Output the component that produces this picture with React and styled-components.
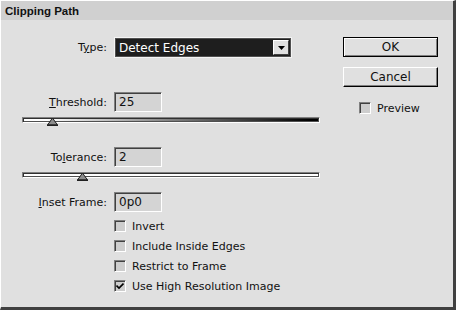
import React from 'react';
import styled, { createGlobalStyle } from 'styled-components';

const GlobalStyle = createGlobalStyle`
    html, body {
        margin: 0;
        padding: 0;
        background: #e0e0e0;
    }
    body {
        font-family: "DejaVu Sans", "Liberation Sans", sans-serif;
        font-size: 11px;
        color: #111;
    }
`;

const Dialog = styled.div`
    width: 456px;
    height: 310px;
    box-sizing: border-box;
    background: #e0e0e0;
    border-top: 1px solid #fff;
    border-left: 1px solid #fff;
    border-right: 3px solid #404040;
    border-bottom: 3px solid #404040;
    display: flex;
    flex-direction: column;
`;

const TitleBar = styled.div`
    height: 19px;
    background: #d0d0d0;
    display: flex;
    align-items: center;
    padding-left: 4px;
    font-family: "Liberation Sans", sans-serif;
    font-weight: 700;
    font-size: 11.5px;
`;

const Body = styled.div`
    display: flex;
    padding: 17px 0 0 21px;
`;

const Form = styled.div`
    width: 298px;
    display: flex;
    flex-direction: column;
`;

const Side = styled.div`
    margin-left: 23px;
    width: 95px;
    display: flex;
    flex-direction: column;
`;

const FieldRow = styled.div`
    display: flex;
    align-items: center;
    height: ${p => p.$h || 20}px;
    margin-top: ${p => p.$mt || 0}px;
`;

const Label = styled.label`
    width: 85px;
    margin-right: 7px;
    text-align: right;
    white-space: nowrap;
`;

const Key = styled.span`
    text-decoration: underline;
`;

const Select = styled.div`
    width: 178px;
    height: 21px;
    box-sizing: border-box;
    border: 1px solid #f4f4f4;
    box-shadow: inset 0 0 0 1px #505050;
    background: #1e1e1e;
    display: flex;
    align-items: center;
    padding: 2px;
    color: #fff;
`;

const SelectText = styled.span`
    flex: 1;
    padding-left: 2px;
    font-size: 12px;
`;

const ArrowButton = styled.span`
    width: 16px;
    height: 15px;
    box-sizing: border-box;
    background: #e0e0e0;
    border-style: solid;
    border-width: 1px;
    border-color: #fff #404040 #404040 #fff;
    display: flex;
    align-items: center;
    justify-content: center;
`;

const Input = styled.div`
    width: 48px;
    height: 20px;
    box-sizing: border-box;
    background: #d4d4d4;
    border-style: solid;
    border-width: 1px;
    border-color: #808080 #fff #fff #808080;
    box-shadow: inset 1px 1px 0 #404040;
    display: flex;
    align-items: center;
    padding-left: 4px;
    font-size: 12px;
`;

const Track = styled.div`
    position: relative;
    height: 6px;
    box-sizing: border-box;
    margin-top: 5px;
    border-style: solid;
    border-width: 1px;
    border-color: #808080 #fff #fff #808080;
    box-shadow: inset 1px 1px 0 #303030, inset -1px -1px 0 #505050;
    background: ${p => p.$gradient
        ? 'linear-gradient(to right, #fff 0%, #fff 8%, #808080 50%, #000 97%)'
        : '#fff'};
`;

const Thumb = styled.svg`
    position: absolute;
    top: -1px;
    width: 11px;
    height: 9px;
    margin-left: -5px;
`;

const CheckList = styled.div`
    display: flex;
    flex-direction: column;
    gap: 8px;
    margin: ${p => p.$margin || '8px 0 0 92px'};
`;

const CheckRow = styled.div`
    display: flex;
    align-items: center;
    height: 12px;
    gap: 6px;
    white-space: nowrap;
`;

const Box = styled.span`
    width: 12px;
    height: 12px;
    box-sizing: border-box;
    background: #cdcdcd;
    border-style: solid;
    border-width: 1px;
    border-color: #808080 #fff #fff #808080;
    box-shadow: inset 1px 1px 0 #404040;
    display: flex;
    align-items: center;
    justify-content: center;
`;

const Button = styled.div`
    height: 20px;
    box-sizing: border-box;
    background: #e0e0e0;
    border: 1px solid ${p => p.$default ? '#000' : '#fff'};
    border-right-color: #000;
    border-bottom-color: #000;
    box-shadow: ${p => p.$default
        ? 'inset 1px 1px 0 #fff, inset -1px -1px 0 #808080'
        : 'inset -1px -1px 0 #808080'};
    display: flex;
    align-items: center;
    justify-content: center;
    font-size: 12px;
    margin-top: ${p => p.$mt || 0}px;
`;

const Tick = () => (
    <svg width="8" height="8" viewBox="0 0 8 8">
        <path d="M0.5 3.5 L3 6 L7.5 1.5" fill="none" stroke="#000" strokeWidth="1.6" />
    </svg>
);

const Slider = ({ value, max, gradient }) => (
    <Track $gradient={gradient}>
        <Thumb viewBox="0 0 11 9" style={{ left: `${(value / max) * 100}%` }}>
            <path d="M0.5 8 L5.5 1 L10.5 8 Z" fill="#8c8c8c" stroke="#202020" strokeWidth="1" />
            <rect x="0" y="7.5" width="11" height="1.5" fill="#202020" />
        </Thumb>
    </Track>
);

const Check = ({ label, checked }) => (
    <CheckRow>
        <Box>{checked && <Tick />}</Box>
        <span>{label}</span>
    </CheckRow>
);

const App = () => {
    return (
        <>
            <GlobalStyle />
            <Dialog>
                <TitleBar>Clipping Path</TitleBar>
                <Body>
                    <Form>
                        <FieldRow $h={21}>
                            <Label>T<Key>y</Key>pe:</Label>
                            <Select>
                                <SelectText>Detect Edges</SelectText>
                                <ArrowButton>
                                    <svg width="7" height="4" viewBox="0 0 7 4">
                                        <path d="M0 0 H7 L3.5 4 Z" fill="#000" />
                                    </svg>
                                </ArrowButton>
                            </Select>
                        </FieldRow>

                        <FieldRow $mt={34}>
                            <Label><Key>T</Key>hreshold:</Label>
                            <Input>25</Input>
                        </FieldRow>
                        <Slider value={25} max={255} gradient />

                        <FieldRow $mt={24}>
                            <Label>To<Key>l</Key>erance:</Label>
                            <Input>2</Input>
                        </FieldRow>
                        <Slider value={2} max={10} />

                        <FieldRow $mt={14}>
                            <Label><Key>I</Key>nset Frame:</Label>
                            <Input>0p0</Input>
                        </FieldRow>

                        <CheckList>
                            <Check label="Invert" />
                            <Check label="Include Inside Edges" />
                            <Check label="Restrict to Frame" />
                            <Check label="Use High Resolution Image" checked />
                        </CheckList>
                    </Form>

                    <Side>
                        <Button $default>OK</Button>
                        <Button $mt={10}>Cancel</Button>
                        <CheckList $margin="15px 0 0 16px">
                            <Check label="Preview" />
                        </CheckList>
                    </Side>
                </Body>
            </Dialog>
        </>
    );
};

export default App;
